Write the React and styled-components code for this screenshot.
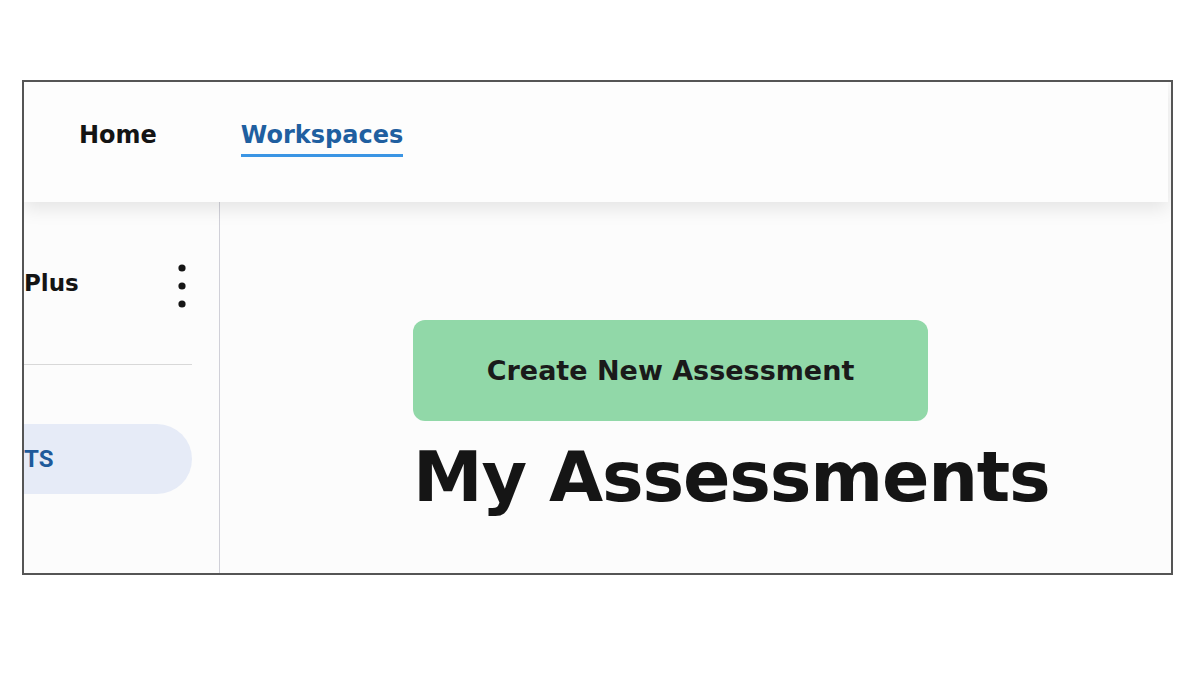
import styled, { createGlobalStyle } from "styled-components";

const GlobalStyle = createGlobalStyle`
    html, body {
        margin: 0;
        padding: 0;
        background: #ffffff;
    }
    body {
        font-family: "DejaVu Sans", "Liberation Sans", sans-serif;
        color: #151515;
    }
`

const Page = styled.div`
    width: 1200px;
    height: 675px;
    padding: 80px 0 0 22px;
    box-sizing: border-box;
`

const Frame = styled.div`
    width: 1151px;
    height: 495px;
    box-sizing: border-box;
    border: 2px solid #555555;
    background: #fcfcfc;
    display: flex;
    flex-direction: column;
    overflow: hidden;
`

const TopNav = styled.nav`
    height: 120px;
    flex-shrink: 0;
    box-sizing: border-box;
    display: flex;
    align-items: center;
    gap: 84px;
    padding: 0 0 12px 55px;
    background: #fdfdfd;
    position: relative;
    z-index: 1;
    box-shadow: 0 6px 18px rgba(0, 0, 0, 0.10);
    margin-right: 3px;
`

const NavLink = styled.a`
    font-size: 24px;
    font-weight: 700;
    color: ${({active}) => active ? '#1f5fa0' : '#141414'};
    text-decoration: none;
    padding-top: 5px;
    padding-bottom: 5px;
    border-bottom: 3px solid ${({active}) => active ? '#3b95e4' : 'transparent'};
`

const Body = styled.div`
    flex: 1;
    display: flex;
`

const Sidebar = styled.aside`
    width: 196px;
    flex-shrink: 0;
    border-right: 1px solid #d0d0d8;
    display: flex;
    flex-direction: column;
    padding-top: 51px;
    box-sizing: border-box;
`

const WorkspaceRow = styled.div`
    display: flex;
    align-items: center;
    justify-content: space-between;
    width: 164px;
    height: 66px;
`

const WorkspaceName = styled.span`
    font-size: 23px;
    font-weight: 700;
    color: #141414;
    margin-top: -6px;
`

const Divider = styled.hr`
    width: 168px;
    margin: 45px 0 0 0;
    border: none;
    border-top: 1px solid #d8d8d8;
`

const NavPill = styled.div`
    margin-top: 59px;
    width: 168px;
    height: 70px;
    border-radius: 0 35px 35px 0;
    background: #e6ebf7;
    display: flex;
    align-items: center;
    font-family: Roboto, "Liberation Sans", sans-serif;
    font-size: 24px;
    font-weight: 700;
    color: #1e5a9b;
`

const Main = styled.main`
    flex: 1;
    padding: 118px 0 0 193px;
`

const CreateButton = styled.button`
    width: 515px;
    height: 101px;
    border: none;
    border-radius: 12px;
    background: #91d8a8;
    font-family: "DejaVu Sans", sans-serif;
    font-size: 27px;
    font-weight: 700;
    color: #1a1a1a;
    cursor: pointer;
`

const Heading = styled.h1`
    margin: 14px 0 0 0;
    font-size: 70px;
    line-height: 84px;
    font-weight: 700;
    letter-spacing: -1.2px;
    color: #151515;
`

const Kebab = () => (
    <svg width="12" height="48" viewBox="0 0 12 48">
        <circle cx="6" cy="6" r="3.6" fill="#151515" />
        <circle cx="6" cy="24" r="3.6" fill="#151515" />
        <circle cx="6" cy="42" r="3.6" fill="#151515" />
    </svg>
)

export default function App() {
    return (
        <>
            <GlobalStyle />
            <Page>
                <Frame>
                    <TopNav>
                        <NavLink>Home</NavLink>
                        <NavLink active>Workspaces</NavLink>
                    </TopNav>
                    <Body>
                        <Sidebar>
                            <WorkspaceRow>
                                <WorkspaceName>Plus</WorkspaceName>
                                <Kebab />
                            </WorkspaceRow>
                            <Divider />
                            <NavPill>TS</NavPill>
                        </Sidebar>
                        <Main>
                            <CreateButton>Create New Assessment</CreateButton>
                            <Heading>My Assessments</Heading>
                        </Main>
                    </Body>
                </Frame>
            </Page>
        </>
    )
}
